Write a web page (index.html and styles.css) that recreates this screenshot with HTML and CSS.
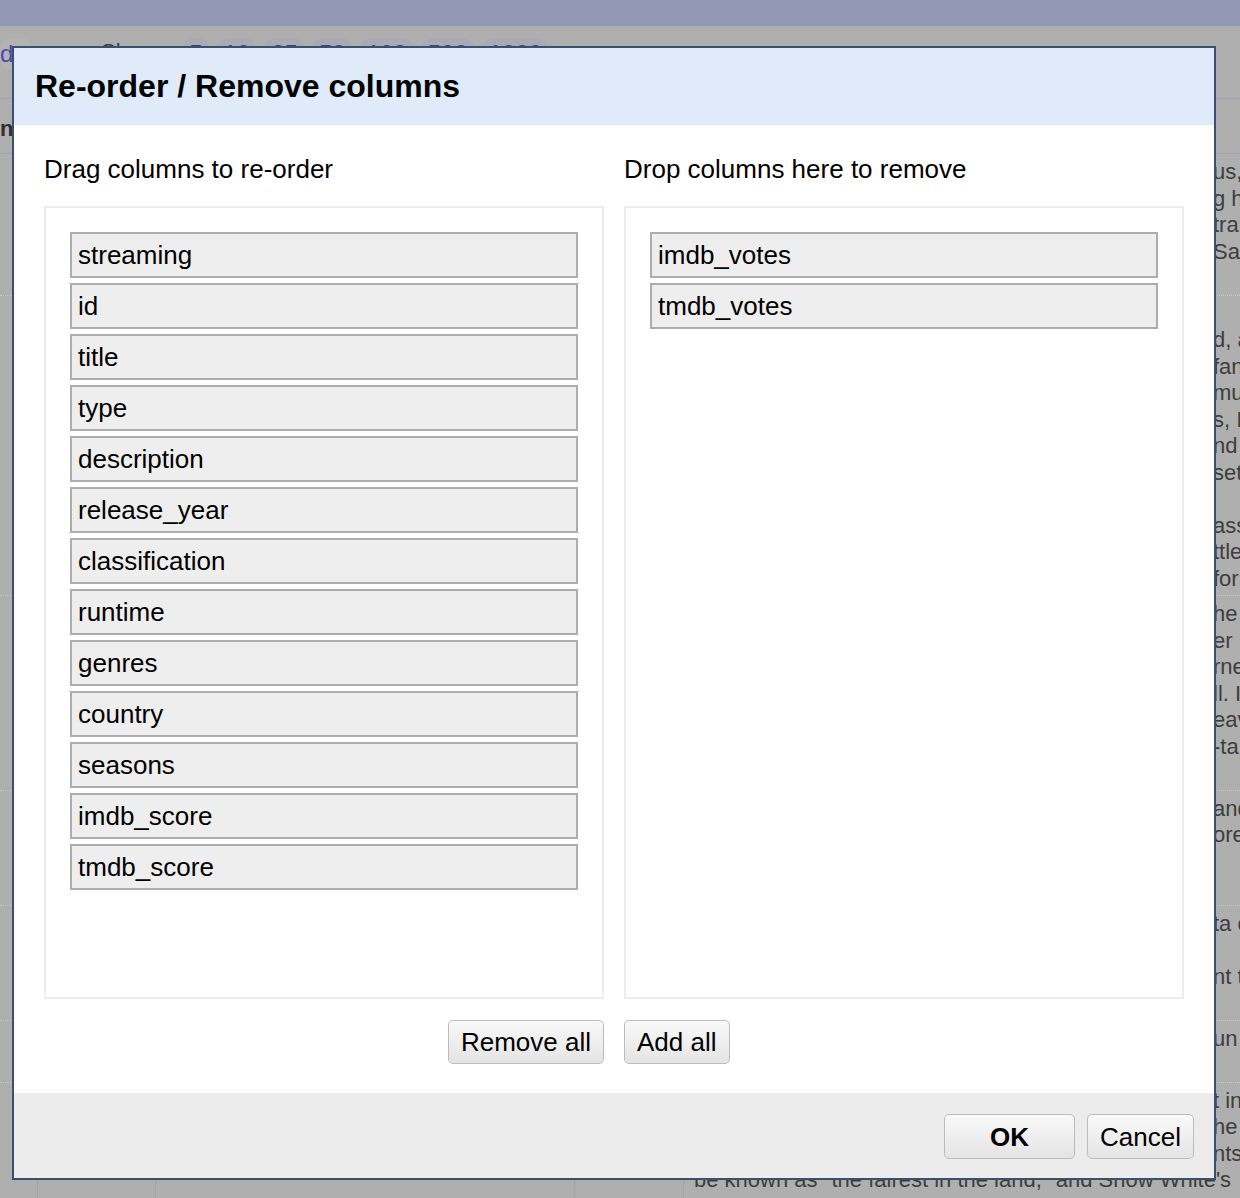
FILE: index.html
```html
<!DOCTYPE html>
<html lang="en">
<head>
<meta charset="utf-8">
<title>Re-order / Remove columns</title>
<link rel="stylesheet" href="styles.css">
</head>
<body>
<div class="page">
  <div class="topbar"></div>
  <div class="toolbar">
    <span class="pill pill-left"><span class="link">d</span></span>
    <span class="show">Show:</span>
    <span class="pill">5</span>
    <span class="pill">10</span>
    <span class="pill">25</span>
    <span class="pill">50</span>
    <span class="pill">100</span>
    <span class="pill">500</span>
    <span class="pill">1000</span>
  </div>
  <div class="thead"><span class="th">n</span></div>
  <div class="rows">
    <div class="row">
      <div class="c"></div><div class="c"></div><div class="c"></div><div class="c"></div>
      <div class="c desc">
        <div class="ln tail">us, his</div>
        <div class="ln tail">g hi</div>
        <div class="ln tail">trai</div>
        <div class="ln tail">Sa</div>
        <div class="ln"></div>
      </div>
    </div>
    <div class="row">
      <div class="c"></div><div class="c"></div><div class="c"></div><div class="c"></div>
      <div class="c desc">
        <div class="ln"></div>
        <div class="ln tail">d, a</div>
        <div class="ln tail">fan</div>
        <div class="ln tail">mus</div>
        <div class="ln tail">s, I</div>
        <div class="ln tail">nd</div>
        <div class="ln tail">set</div>
        <div class="ln"></div>
        <div class="ln tail">ass</div>
        <div class="ln tail">ttle</div>
        <div class="ln tail">for</div>
      </div>
    </div>
    <div class="row">
      <div class="c"></div><div class="c"></div><div class="c"></div><div class="c"></div>
      <div class="c desc">
        <div class="ln tail">he </div>
        <div class="ln tail">er I</div>
        <div class="ln tail">rne</div>
        <div class="ln tail">ll. I</div>
        <div class="ln tail">eav</div>
        <div class="ln tail">-ta</div>
        <div class="ln"></div>
      </div>
    </div>
    <div class="row">
      <div class="c"></div><div class="c"></div><div class="c"></div><div class="c"></div>
      <div class="c desc">
        <div class="ln tail">and</div>
        <div class="ln tail">ore</div>
        <div class="ln"></div>
        <div class="ln"></div>
      </div>
    </div>
    <div class="row">
      <div class="c"></div><div class="c"></div><div class="c"></div><div class="c"></div>
      <div class="c desc">
        <div class="ln tail">ta o</div>
        <div class="ln"></div>
        <div class="ln tail">nt t</div>
        <div class="ln"></div>
      </div>
    </div>
    <div class="row">
      <div class="c"></div><div class="c"></div><div class="c"></div><div class="c"></div>
      <div class="c desc">
        <div class="ln tail">un</div>
        <div class="ln"></div>
      </div>
    </div>
    <div class="row">
      <div class="c"></div><div class="c"></div><div class="c"></div><div class="c"></div>
      <div class="c desc">
        <div class="ln tail">t in</div>
        <div class="ln tail">he </div>
        <div class="ln tail">nts</div>
        <div class="ln">be known as "the fairest in the land," and Snow White's</div>
        <div class="ln">beauty is threatened by the jealous queen</div>
      </div>
    </div>
  </div>
</div>

<div class="dialog" role="dialog" aria-labelledby="dlg-title">
  <div class="dialog-header">
    <h1 id="dlg-title" class="dialog-title">Re-order / Remove columns</h1>
  </div>
  <div class="dialog-body">
    <div class="col-label">Drag columns to re-order</div>
    <div class="col-label">Drop columns here to remove</div>
    <div class="col-box">
      <div class="col-item">streaming</div>
      <div class="col-item">id</div>
      <div class="col-item">title</div>
      <div class="col-item">type</div>
      <div class="col-item">description</div>
      <div class="col-item">release_year</div>
      <div class="col-item">classification</div>
      <div class="col-item">runtime</div>
      <div class="col-item">genres</div>
      <div class="col-item">country</div>
      <div class="col-item">seasons</div>
      <div class="col-item">imdb_score</div>
      <div class="col-item">tmdb_score</div>
    </div>
    <div class="col-box">
      <div class="col-item">imdb_votes</div>
      <div class="col-item">tmdb_votes</div>
    </div>
    <div class="btn-cell btn-cell-left"><button class="btn">Remove all</button></div>
    <div class="btn-cell"><button class="btn">Add all</button></div>
  </div>
  <div class="dialog-footer">
    <button class="btn btn-ok">OK</button>
    <button class="btn">Cancel</button>
  </div>
</div>
</body>
</html>
```

FILE: styles.css
```css
* { box-sizing: border-box; }

html, body {
  margin: 0;
  padding: 0;
  height: 100%;
  overflow: hidden;
}

body {
  background: #afafaf;
  font-family: "Liberation Sans", Arial, sans-serif;
  color: #000;
}

/* ---------- dimmed page behind the dialog ---------- */
.page {
  width: 1240px;
  color: #3e3e3e;
}

.topbar {
  height: 26px;
  background: #9297b2;
}

.toolbar {
  height: 72px;
  display: flex;
  align-items: flex-start;
  padding-top: 12px;
  font-size: 24px;
  gap: 9px;
}

.pill {
  display: inline-flex;
  justify-content: center;
  background: #a9aab4;
  border-radius: 11px;
  padding: 2px 6px;
  color: #3c4085;
  min-height: 32px;
  line-height: 28px;
}

.pill-left {
  background: #b3b3b3;
  width: 33px;
  padding: 4px 0 0;
  justify-content: flex-start;
  margin-right: 59px;
}

.pill-left .link {
  color: #4b4cab;
  font-size: 24px;
  line-height: 1;
}

.show {
  color: #3e3e3e;
  font-size: 22px;
  line-height: 28px;
  margin-right: 12px;
}

.thead {
  height: 56px;
  border-top: 1px solid #9ea3c0;
  border-bottom: 1px solid #9ea3c0;
  display: flex;
  align-items: center;
}

.th {
  font-weight: bold;
  font-size: 22px;
  color: #2e2e2e;
  padding-top: 6px;
}

.rows { display: block; }

.row {
  display: grid;
  grid-template-columns: 37px 118px 419px 109px 1fr;
  border-bottom: 1px dotted #c8c8c8;
}

.c {
  border-left: 1px solid #a3a3a3;
  min-height: 10px;
}

.c:first-child { border-left: 0; }

.desc {
  padding: 5px 0 3px 10px;
  font-size: 22px;
  line-height: 26.5px;
  white-space: nowrap;
  overflow: hidden;
}

.ln { height: 26.5px; }

.tail { padding-left: 519px; }

/* ---------- dialog ---------- */
.dialog {
  position: fixed;
  left: 12px;
  top: 46px;
  width: 1204px;
  border: 2px solid #3b4f6e;
  background: #fff;
}

.dialog-header {
  height: 77px;
  background: #e0ebf9;
  display: flex;
  align-items: center;
  padding: 0 0 0 21px;
}

.dialog-title {
  margin: 0;
  font-size: 32px;
  font-weight: bold;
  color: #000;
}

.dialog-body {
  display: grid;
  grid-template-columns: 560px 560px;
  grid-template-rows: auto 793px auto;
  column-gap: 20px;
  padding: 30px 30px 29px;
}

.col-label {
  font-size: 26px;
  line-height: 28px;
  margin-bottom: 23px;
}

.col-box {
  border: 2px solid #ededed;
  padding: 24px;
  display: flex;
  flex-direction: column;
  gap: 5px;
}

.col-item {
  height: 46px;
  border: 2px solid #adadad;
  background: #eeeeee;
  font-size: 26px;
  line-height: 42px;
  padding-left: 6px;
}

.btn-cell {
  display: flex;
  margin-top: 21px;
}

.btn-cell-left { justify-content: flex-end; }

.btn {
  font-family: "Liberation Sans", Arial, sans-serif;
  font-size: 26px;
  line-height: 30px;
  color: #000;
  height: 44px;
  padding: 6px 12px;
  border: 1px solid #bcbcbc;
  border-radius: 5px;
  background: linear-gradient(#f9f9f9, #e4e4e4);
}

.dialog-footer {
  height: 85px;
  background: #ececec;
  display: flex;
  justify-content: flex-end;
  align-items: flex-start;
  gap: 12px;
  padding: 21px 20px 0 0;
}

.dialog-footer .btn { height: 45px; }

.btn-ok {
  font-weight: bold;
  padding: 6px 45px;
}
```
